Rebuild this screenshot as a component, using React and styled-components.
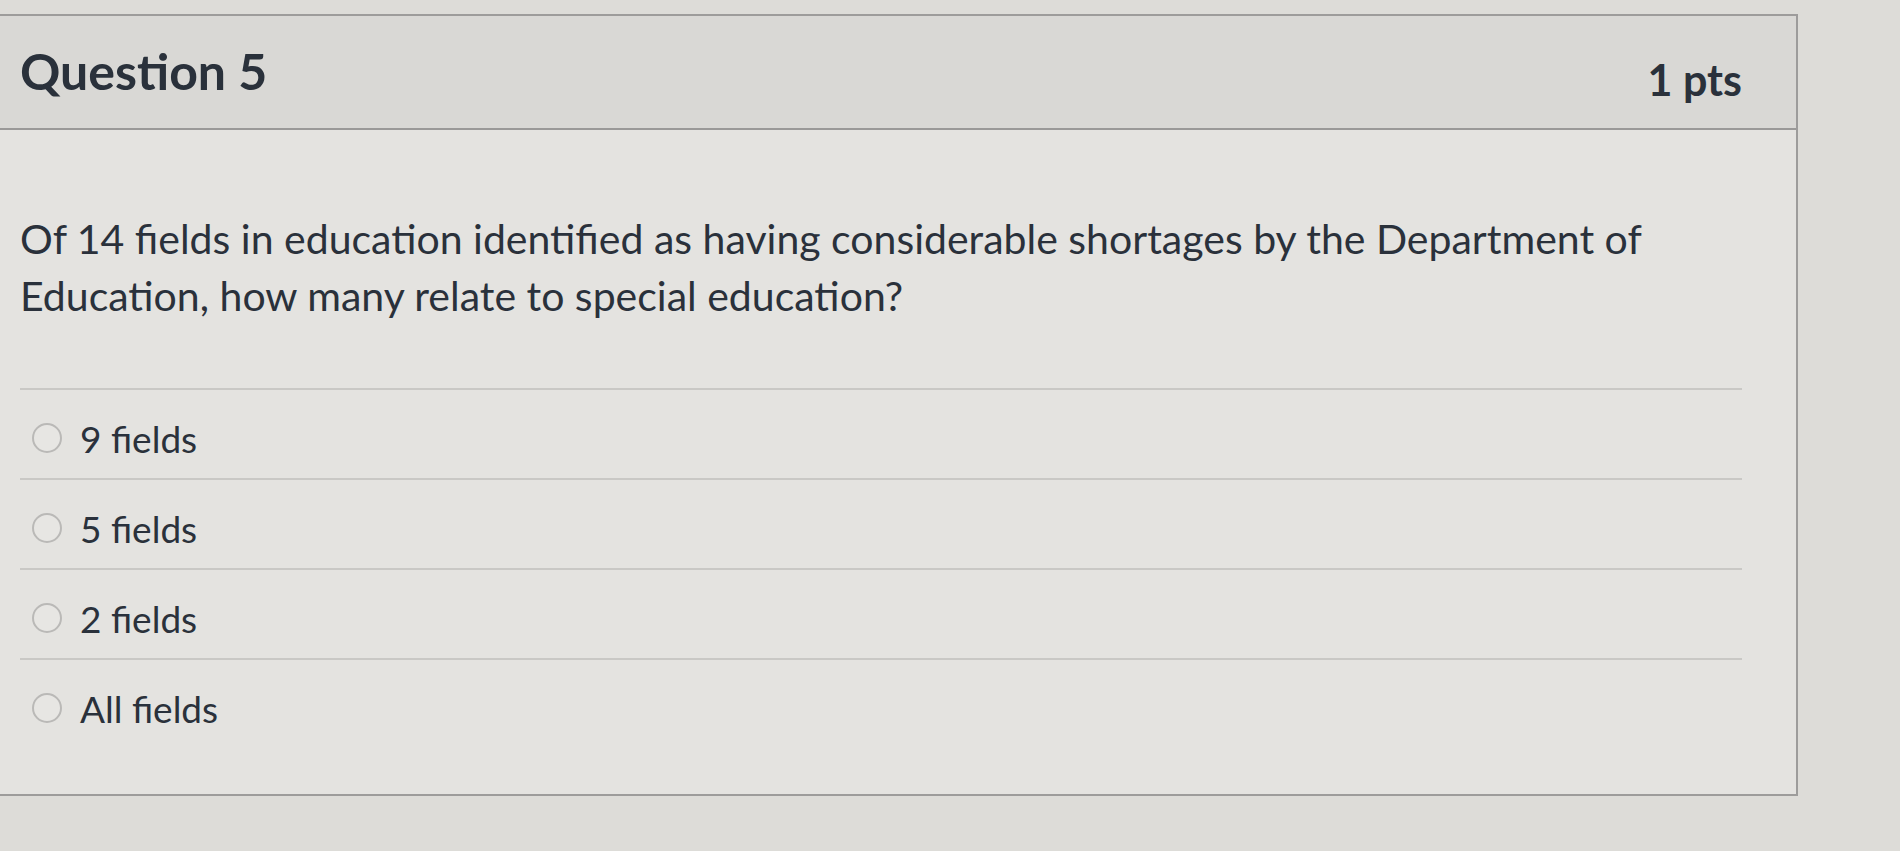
import styled, { createGlobalStyle } from "styled-components";

const GlobalStyle = createGlobalStyle`
  html, body {
    margin: 0;
    padding: 0;
    background: #dddcd8;
    overflow: hidden;
  }
  body {
    font-family: Lato, "Noto Sans", sans-serif;
    color: #2a313b;
  }
`;

const Page = styled.div`
  width: 1900px;
  height: 851px;
  padding-top: 14px;
  box-sizing: border-box;
`;

const Card = styled.div`
  box-sizing: border-box;
  width: 1818px;
  margin-left: -20px;
  border: 2px solid #9d9c9b;
  background: #e4e3e0;
`;

const Header = styled.div`
  display: flex;
  justify-content: space-between;
  align-items: baseline;
  height: 114px;
  padding: 22px 54px 0 38px;
  box-sizing: border-box;
  background: #d9d8d5;
  border-bottom: 2px solid #9a9998;
`;

const Title = styled.h2`
  margin: 0;
  font-size: 50px;
  font-weight: 700;
  line-height: 66px;
`;

const Points = styled.span`
  font-size: 43px;
  font-weight: 700;
  position: relative;
  top: 6px;
`;

const Body = styled.div`
  padding: 80px 54px 46px 38px;
`;

const QuestionText = styled.p`
  margin: 0 0 64px;
  font-size: 41px;
  line-height: 57px;
  font-weight: 400;
  max-width: 1700px;
`;

const AnswerList = styled.div`
  display: flex;
  flex-direction: column;
`;

const Answer = styled.label`
  display: flex;
  align-items: center;
  gap: 18px;
  height: 90px;
  padding: 8px 0 0 12px;
  box-sizing: border-box;
  border-top: 2px solid #c9c8c5;
  font-size: 37px;
  cursor: pointer;
`;

const Radio = styled.span`
  width: 26px;
  height: 26px;
  border-radius: 50%;
  border: 2px solid #bab9b7;
  background: #e7e6e3;
  flex: none;
`;

const answers = ["9 fields", "5 fields", "2 fields", "All fields"];

export default function App() {
  return (
    <Page>
      <GlobalStyle />
      <Card>
        <Header>
          <Title>Question 5</Title>
          <Points>1 pts</Points>
        </Header>
        <Body>
          <QuestionText>
            Of 14 fields in education identified as having considerable
            shortages by the Department of Education, how many relate to
            special education?
          </QuestionText>
          <AnswerList>
            {answers.map((a) => (
              <Answer key={a}>
                <Radio />
                {a}
              </Answer>
            ))}
          </AnswerList>
        </Body>
      </Card>
    </Page>
  );
}
